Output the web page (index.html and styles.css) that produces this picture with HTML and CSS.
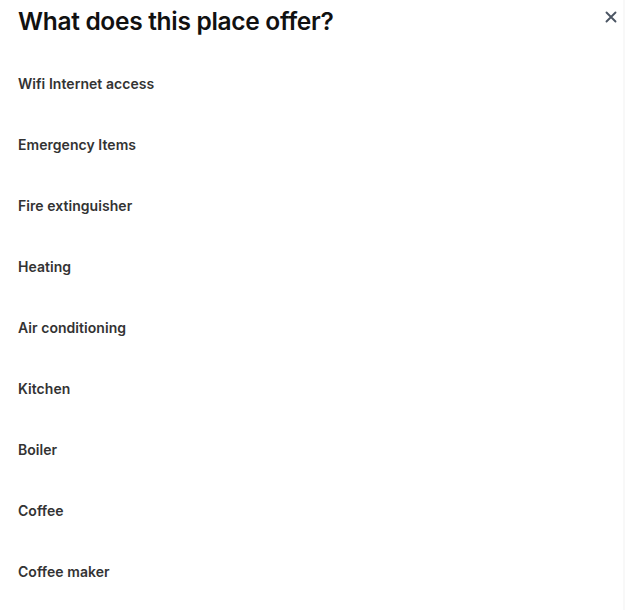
FILE: index.html
```html
<!DOCTYPE html>
<html>
<head>
<meta charset="utf-8">
<link rel="stylesheet" href="styles.css">
</head>
<body>
<div class="modal">
  <header class="head">
    <h1 class="title">What does this place offer?</h1>
    <button class="close" aria-label="Close">
      <svg width="12" height="12" viewBox="0 0 12 12"><path d="M1.5 1.5L10.5 10.5M10.5 1.5L1.5 10.5" stroke="#4b5563" stroke-width="1.9" stroke-linecap="round"/></svg>
    </button>
  </header>
  <ul class="list">
    <li>Wifi Internet access</li>
    <li>Emergency Items</li>
    <li>Fire extinguisher</li>
    <li>Heating</li>
    <li>Air conditioning</li>
    <li>Kitchen</li>
    <li>Boiler</li>
    <li>Coffee</li>
    <li>Coffee maker</li>
  </ul>
</div>
</body>
</html>
```
FILE: styles.css
```css
html, body { margin: 0; padding: 0; background: #fff; }
body { font-family: Inter, "Noto Sans", sans-serif; width: 625px; height: 610px; overflow: hidden; }
.modal { padding: 0 18px; border-right: 2px solid #f8f8f8; height: 610px; box-sizing: border-box; }
.head { display: flex; justify-content: space-between; align-items: flex-start; height: 53px; }
.title { margin: 4px 0 0; font-size: 24.5px; font-weight: 600; color: #111; letter-spacing: -0.3px; line-height: 34px; }
.close { border: 0; background: none; padding: 0; margin: 11px -12px 0 0; width: 12px; height: 12px; display: flex; }
.list { list-style: none; margin: 0; padding: 0; }
.list li { height: 61px; line-height: 61px; font-size: 14px; font-weight: 600; color: #333; letter-spacing: 0.05px; }
```
